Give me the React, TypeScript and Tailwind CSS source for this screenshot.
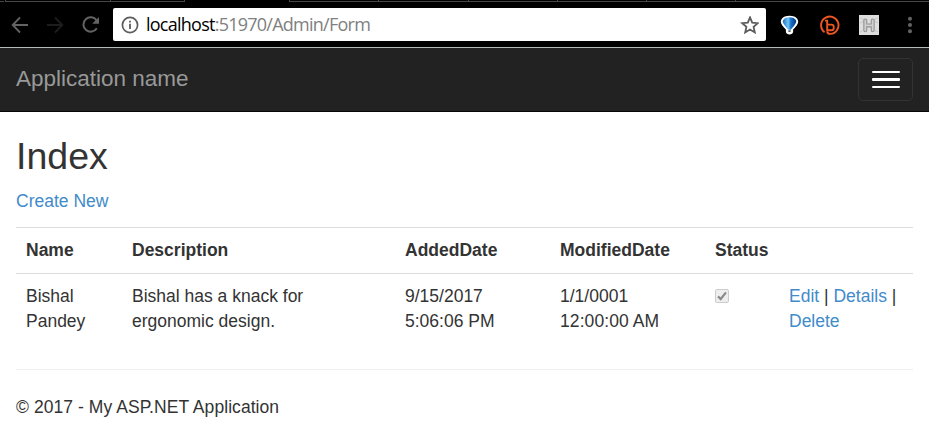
import type { ReactNode } from "react";

const headings = ["Name", "Description", "AddedDate", "ModifiedDate", "Status", ""];

function Link({ children }: { children: ReactNode }) {
  return (
    <a href="#" className="text-[#428bca] no-underline">
      {children}
    </a>
  );
}

function TabStrip() {
  return (
    <div className="flex h-[2px] items-stretch">
      <div className="mr-px ml-0 w-[4px] border-b border-[#484848]" />
      <div className="w-[105px] border-b border-l border-[#484848]" />
      <div className="w-[75px] border-x border-b border-[#484848]" />
      <div className="w-[104px]" />
      <div className="w-[90px] border-x border-b border-[#484848]" />
      <div className="w-[90px] border-r border-b border-[#484848]" />
      <div className="w-[89px] border-r border-b border-[#484848]" />
      <div className="w-[89px] border-r border-b border-[#484848]" />
      <div className="w-[89px] border-r border-b border-[#484848]" />
      <div className="flex-1 border-b border-[#484848]" />
    </div>
  );
}

function BrowserBar() {
  return (
    <div className="h-[48px] border-b border-[#b4bab6] bg-black">
      <TabStrip />
      <div className="flex h-[45px] items-center">
        <svg className="ml-[11px] h-[20px] w-[18px] shrink-0" viewBox="0 0 18 20" fill="none" stroke="#636363" strokeWidth="1.8">
          <path d="M17 10H2M9 2.5L1.7 10L9 17.5" />
        </svg>
        <svg className="ml-[17px] h-[20px] w-[18px] shrink-0" viewBox="0 0 18 20" fill="none" stroke="#1d1d1d" strokeWidth="1.8">
          <path d="M1 10H16M9 2.5L16.3 10L9 17.5" />
        </svg>
        <svg className="ml-[17px] h-[20px] w-[19px] shrink-0" viewBox="0 0 19 20" fill="none" stroke="#636363" strokeWidth="2">
          <path d="M15.6 5.5A7.2 7.2 0 1 0 15.8 13.2" />
          <path d="M18 2V8.8H11.2Z" fill="#636363" stroke="none" />
        </svg>
        <div className="ml-[13px] flex h-[33px] w-[653px] items-center rounded-[2px] bg-white">
          <svg className="ml-[8px] h-[18px] w-[18px] shrink-0" viewBox="0 0 18 18">
            <circle cx="9" cy="9" r="7.6" fill="none" stroke="#5c5c5c" strokeWidth="1.7" />
            <path d="M8.1 7.8h1.8v5.3H8.1zM8.1 4.7h1.8v1.8H8.1z" fill="#5c5c5c" />
          </svg>
          <div className="mb-px ml-[7px] w-[590px] font-['Open_Sans',sans-serif] text-[18px] leading-[24px] tracking-[-0.75px] whitespace-nowrap text-[#808080]">
            <span className="text-black">localhost</span>:51970/Admin/Form
          </div>
          <svg className="ml-[4px] h-[18px] w-[19px] shrink-0" viewBox="0 0 19 18" fill="none" stroke="#5c5c5c" strokeWidth="1.8">
            <path d="M10 1.4L12.2 6.7L17.8 7.2L13.6 10.9L14.8 16.4L10 13.5L5.2 16.4L6.4 10.9L2.2 7.2L7.8 6.7Z" />
          </svg>
        </div>
        <svg className="ml-[14px] h-[20px] w-[19px] shrink-0" viewBox="0 0 20 20">
          <defs>
            <linearGradient id="balloon" x1="0" y1="0" x2="1" y2="0">
              <stop offset="0" stopColor="#1870c4" />
              <stop offset=".4" stopColor="#75c6f5" />
              <stop offset=".6" stopColor="#1672cc" />
              <stop offset="1" stopColor="#063985" />
            </linearGradient>
          </defs>
          <path d="M5 1Q10 -.6 15 1Q19.8 3.5 19 7.5Q18.4 10 13.8 14.8V17Q13.3 19.9 10 19.9Q6.7 19.9 6.2 17V14.8Q1.6 10 1 7.5Q.2 3.5 5 1Z" fill="white" />
          <path d="M5.5 2.5Q10 1 14.5 2.5Q18 4.8 16.8 7.7Q15.5 10.5 11.3 15H8.7Q4.5 10.5 3.2 7.7Q2 4.8 5.5 2.5Z" fill="url(#balloon)" />
          <path d="M8.7 15.5h2.6v1.4Q10 18 8.7 16.9Z" fill="#5a6068" />
        </svg>
        <svg className="ml-[21px] h-[20px] w-[20px] shrink-0" viewBox="0 0 20 20" fill="none" stroke="#ee5722" strokeWidth="1.9">
          <path d="M4.6 17.2A8.7 8.7 0 1 1 10.4 18.9Q7.2 18.9 7.2 16.5" />
          <path d="M5 5.6H7.2V16.5" />
          <path d="M7.2 9.6H11.5Q13.7 9.6 13.7 11.7V13.2Q13.7 15.3 11.5 15.3H7.2" />
        </svg>
        <svg className="ml-[19px] h-[20px] w-[20px] shrink-0" viewBox="0 0 20 20">
          <path d="M0 0h20v20H0z" fill="#dedede" />
          <path d="M1 3l5 2M1 8l4-2M19 3l-5 2M19 8l-4-2M1 17l4-2M19 17l-4-2" stroke="#c2c2c2" strokeWidth=".8" />
          <path d="M6.3 5.5v9.8M13.7 5.5v9.8M6.3 10.4h7.4" fill="none" stroke="#929292" strokeWidth="4" strokeLinecap="round" />
          <path d="M6.3 5.5v9.8M13.7 5.5v9.8M6.3 10.4h7.4" fill="none" stroke="#d0d0d0" strokeWidth="1.8" strokeLinecap="round" />
        </svg>
        <svg className="ml-[28px] h-[18px] w-[6px] shrink-0" viewBox="0 0 6 18" fill="#636363">
          <circle cx="3" cy="2.7" r="2" />
          <circle cx="3" cy="9" r="2" />
          <circle cx="3" cy="15.3" r="2" />
        </svg>
      </div>
    </div>
  );
}

export default function App() {
  return (
    <div className="h-[425px] overflow-hidden bg-white font-['Liberation_Sans',Arial,sans-serif] text-[17.5px] leading-[25px] text-[#333]">
      <BrowserBar />
      <nav className="flex h-[64px] items-center justify-between border-b border-[#080808] bg-[#222] px-4">
        <span className="mb-[2px] text-[22.5px] leading-[25px] text-[#999]">Application name</span>
        <button className="flex h-[43px] w-[55px] flex-col items-center justify-center gap-[5px] rounded-[5px] border border-[#333]">
          <span className="h-[2px] w-[28px] rounded-[1px] bg-white" />
          <span className="h-[3px] w-[28px] rounded-[1px] bg-white" />
          <span className="h-[2px] w-[28px] rounded-[1px] bg-white" />
        </button>
      </nav>
      <main className="px-4">
        <h2 className="pt-[24px] text-[37.5px] leading-[41px] font-normal">Index</h2>
        <p className="mt-[12px] mb-[13px]">
          <Link>Create New</Link>
        </p>
        <table className="w-full table-fixed border-separate border-spacing-0 text-left">
          <colgroup>
            <col className="w-[106px]" />
            <col className="w-[273px]" />
            <col className="w-[155px]" />
            <col className="w-[155px]" />
            <col className="w-[74px]" />
            <col className="w-[134px]" />
          </colgroup>
          <thead>
            <tr>
              {headings.map((heading) => (
                <th key={heading} className="border-t border-[#ddd] p-[10px] font-bold">
                  {heading}
                </th>
              ))}
            </tr>
          </thead>
          <tbody>
            <tr className="align-top">
              <td className="border-t border-[#ddd] p-[10px]">Bishal Pandey</td>
              <td className="border-t border-[#ddd] p-[10px]">
                Bishal has a knack for
                <br />
                ergonomic design.
              </td>
              <td className="border-t border-[#ddd] p-[10px]">
                9/15/2017
                <br />
                5:06:06 PM
              </td>
              <td className="border-t border-[#ddd] p-[10px]">
                1/1/0001
                <br />
                <span className="tracking-[0.08px]">12:00:00 AM</span>
              </td>
              <td className="border-t border-[#ddd] p-[10px]">
                <div className="mt-[5px] flex h-[14px] w-[14px] items-center justify-center rounded-[2px] border border-[#ccc] bg-[#eee]">
                  <svg className="h-[12px] w-[12px]" viewBox="0 0 12 12" fill="none" stroke="#8b8b8b" strokeWidth="2.2">
                    <path d="M2 6.4L4.7 9L10 2.4" />
                  </svg>
                </div>
              </td>
              <td className="border-t border-[#ddd] py-[10px] pl-[10px] whitespace-nowrap">
                <Link>Edit</Link> | <Link>Details</Link> |
                <br />
                <Link>Delete</Link>
              </td>
            </tr>
          </tbody>
        </table>
        <hr className="my-[25px] border-t border-[#eee]" />
        <footer className="tracking-[0.06px]">© 2017 - My ASP.NET Application</footer>
      </main>
    </div>
  );
}
